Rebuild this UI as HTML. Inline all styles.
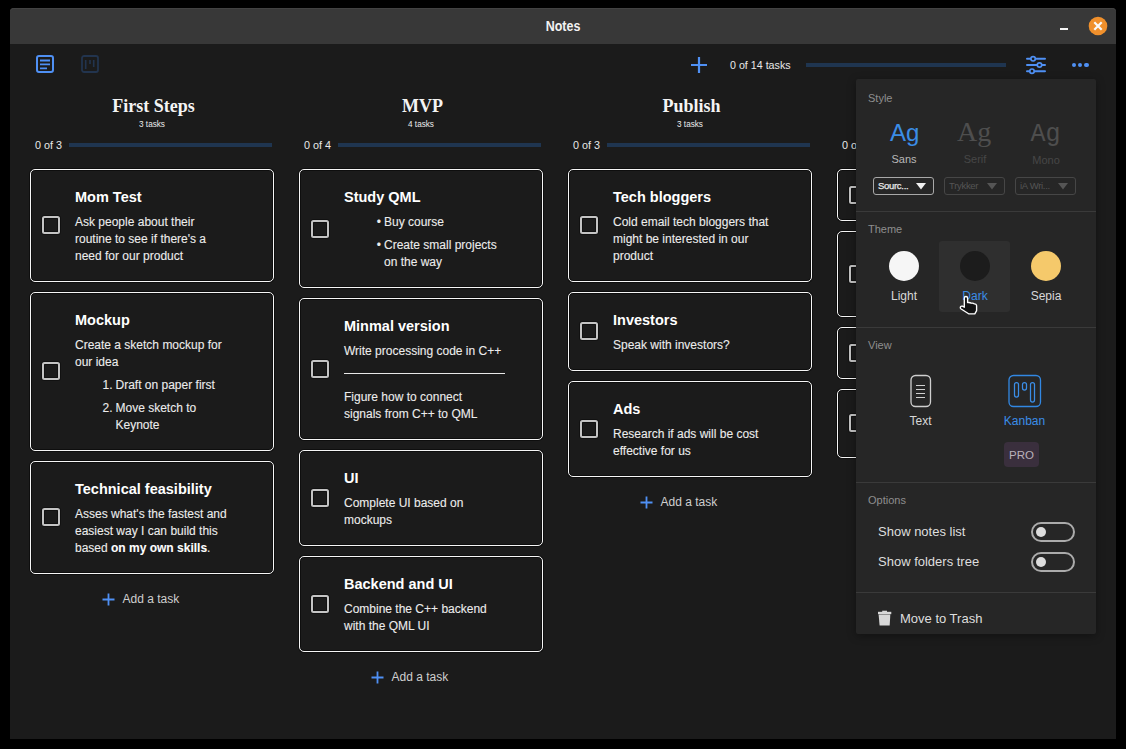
<!DOCTYPE html>
<html><head><meta charset="utf-8"><title>Notes</title>
<style>
html,body{margin:0;padding:0;width:1126px;height:749px;overflow:hidden;background:#000;font-family:'Liberation Sans', sans-serif;}
.t{position:absolute;line-height:0;white-space:nowrap;}
b{font-weight:700}
</style></head><body>
<div style="position:absolute;left:10px;top:8px;width:1106px;height:731px;background:#1b1b1b;border-radius:4px 4px 0 0;"></div>
<div style="position:absolute;left:10px;top:8px;width:1106px;height:36px;background:#383838;border-radius:4px 4px 0 0;box-shadow:inset 0 1px 0 #424242;"></div>
<div class="t" style="left:563px;transform:translateX(-50%);top:25.97px;font-size:14.5px;color:#f2f2f2;font-weight:700;font-family:'Liberation Sans', sans-serif;transform:translateX(-50%) scaleX(0.86);">Notes</div>
<div style="position:absolute;left:1060px;top:28px;width:8px;height:2px;background:#f4f4f4;"></div>
<svg style="position:absolute;left:1088px;top:16px" width="20" height="20"><circle cx="10" cy="10" r="9.3" fill="#f0902c"/><path d="M6.3 6.3L13.7 13.7M13.7 6.3L6.3 13.7" stroke="#fafafa" stroke-width="2.2"/></svg>
<svg style="position:absolute;left:35px;top:54px" width="20" height="20"><rect x="2" y="2" width="16" height="16" rx="2" fill="none" stroke="#4f90f4" stroke-width="2"/><path d="M5 6.5H15M5 10.3H15M5 14.3H12" stroke="#4f90f4" stroke-width="1.8"/></svg>
<svg style="position:absolute;left:80px;top:54px" width="20" height="20"><rect x="2" y="2" width="16" height="16" rx="2" fill="none" stroke="#22344e" stroke-width="1.8"/><path d="M5.7 6V15M10 6V10M13.7 6V13" stroke="#22344e" stroke-width="1.6"/></svg>
<svg style="position:absolute;left:690px;top:56px" width="18" height="18"><path d="M9 1V17M1 9H17" stroke="#4f90f4" stroke-width="2.2"/></svg>
<div class="t" style="left:730px;top:65.19px;font-size:10.7px;color:#e8e8e8;font-weight:400;font-family:'Liberation Sans', sans-serif;">0 of 14 tasks</div>
<div style="position:absolute;left:806px;top:63px;width:200px;height:4px;background:#1f3550;"></div>
<svg style="position:absolute;left:1024px;top:53px" width="24" height="24"><g stroke="#4f90f4" stroke-width="2" stroke-linecap="round" fill="#1b1b1b"><path d="M3 5.8H21M3 12H21M3 18.2H21"/><circle cx="9.1" cy="5.8" r="2.2" stroke-width="1.7"/><circle cx="15.5" cy="12" r="2.2" stroke-width="1.7"/><circle cx="8" cy="18.2" r="2.2" stroke-width="1.7"/></g></svg>
<div style="position:absolute;left:1071.8px;top:62.8px;width:4.4px;height:4.4px;border-radius:50%;background:#4f90f4"></div>
<div style="position:absolute;left:1078.1px;top:62.8px;width:4.4px;height:4.4px;border-radius:50%;background:#4f90f4"></div>
<div style="position:absolute;left:1084.3px;top:62.8px;width:4.4px;height:4.4px;border-radius:50%;background:#4f90f4"></div>
<div class="t" style="left:153.5px;transform:translateX(-50%);top:106.43px;font-size:18px;color:#f4f4f4;font-weight:700;font-family:'Liberation Serif', serif;">First Steps</div>
<div class="t" style="left:152px;transform:translateX(-50%);top:125.16px;font-size:8.2px;color:#ececec;font-weight:400;font-family:'Liberation Sans', sans-serif;">3 tasks</div>
<div class="t" style="left:35px;top:145.06px;font-size:10.8px;color:#e8e8e8;font-weight:400;font-family:'Liberation Sans', sans-serif;">0 of 3</div>
<div style="position:absolute;left:69px;top:143px;width:203px;height:4px;background:#1f3550;"></div>
<div class="t" style="left:422.5px;transform:translateX(-50%);top:106.43px;font-size:18px;color:#f4f4f4;font-weight:700;font-family:'Liberation Serif', serif;">MVP</div>
<div class="t" style="left:421px;transform:translateX(-50%);top:125.16px;font-size:8.2px;color:#ececec;font-weight:400;font-family:'Liberation Sans', sans-serif;">4 tasks</div>
<div class="t" style="left:304px;top:145.06px;font-size:10.8px;color:#e8e8e8;font-weight:400;font-family:'Liberation Sans', sans-serif;">0 of 4</div>
<div style="position:absolute;left:338px;top:143px;width:203px;height:4px;background:#1f3550;"></div>
<div class="t" style="left:691.5px;transform:translateX(-50%);top:106.43px;font-size:18px;color:#f4f4f4;font-weight:700;font-family:'Liberation Serif', serif;">Publish</div>
<div class="t" style="left:690px;transform:translateX(-50%);top:125.16px;font-size:8.2px;color:#ececec;font-weight:400;font-family:'Liberation Sans', sans-serif;">3 tasks</div>
<div class="t" style="left:573px;top:145.06px;font-size:10.8px;color:#e8e8e8;font-weight:400;font-family:'Liberation Sans', sans-serif;">0 of 3</div>
<div style="position:absolute;left:607px;top:143px;width:203px;height:4px;background:#1f3550;"></div>
<div class="t" style="left:842px;top:145.06px;font-size:10.8px;color:#e8e8e8;font-weight:400;font-family:'Liberation Sans', sans-serif;">0 of 3</div>
<div style="position:absolute;left:30px;top:169px;width:244px;height:113px;box-sizing:border-box;border:1px solid #f6f6f6;border-radius:5px;box-shadow:0 0 0 1px rgba(0,0,0,0.45), inset 0 0 0 1px rgba(0,0,0,0.45);"></div>
<div style="position:absolute;left:42px;top:216px;width:18px;height:18px;box-sizing:border-box;border:2px solid #c4c4c4;border-radius:2.5px;box-shadow:0 0 0 1px rgba(0,0,0,0.35), inset 0 0 0 1px rgba(0,0,0,0.35);"></div>
<div class="t" style="left:75px;top:196.57px;font-size:14.5px;color:#ffffff;font-weight:700;font-family:'Liberation Sans', sans-serif;">Mom Test</div>
<div class="t" style="left:75px;top:221.54px;font-size:12px;color:#ececec;font-weight:400;font-family:'Liberation Sans', sans-serif;-webkit-text-stroke:0.2px rgba(236,236,236,0.6);">Ask people about their</div>
<div class="t" style="left:75px;top:238.54px;font-size:12px;color:#ececec;font-weight:400;font-family:'Liberation Sans', sans-serif;-webkit-text-stroke:0.2px rgba(236,236,236,0.6);">routine to see if there's a</div>
<div class="t" style="left:75px;top:255.54px;font-size:12px;color:#ececec;font-weight:400;font-family:'Liberation Sans', sans-serif;-webkit-text-stroke:0.2px rgba(236,236,236,0.6);">need for our product</div>
<div style="position:absolute;left:30px;top:292px;width:244px;height:159px;box-sizing:border-box;border:1px solid #f6f6f6;border-radius:5px;box-shadow:0 0 0 1px rgba(0,0,0,0.45), inset 0 0 0 1px rgba(0,0,0,0.45);"></div>
<div style="position:absolute;left:42px;top:362px;width:18px;height:18px;box-sizing:border-box;border:2px solid #c4c4c4;border-radius:2.5px;box-shadow:0 0 0 1px rgba(0,0,0,0.35), inset 0 0 0 1px rgba(0,0,0,0.35);"></div>
<div class="t" style="left:75px;top:319.57px;font-size:14.5px;color:#ffffff;font-weight:700;font-family:'Liberation Sans', sans-serif;">Mockup</div>
<div class="t" style="left:75px;top:345.34px;font-size:12px;color:#ececec;font-weight:400;font-family:'Liberation Sans', sans-serif;-webkit-text-stroke:0.2px rgba(236,236,236,0.6);">Create a sketch mockup for</div>
<div class="t" style="left:75px;top:362.24px;font-size:12px;color:#ececec;font-weight:400;font-family:'Liberation Sans', sans-serif;-webkit-text-stroke:0.2px rgba(236,236,236,0.6);">our idea</div>
<div class="t" style="left:115.5px;top:385.04px;font-size:12px;color:#ececec;font-weight:400;font-family:'Liberation Sans', sans-serif;-webkit-text-stroke:0.2px rgba(236,236,236,0.6);"><span style="position:absolute;right:100%;padding-right:3px">1.</span>Draft on paper first</div>
<div class="t" style="left:115.5px;top:407.94px;font-size:12px;color:#ececec;font-weight:400;font-family:'Liberation Sans', sans-serif;-webkit-text-stroke:0.2px rgba(236,236,236,0.6);"><span style="position:absolute;right:100%;padding-right:3px">2.</span>Move sketch to</div>
<div class="t" style="left:115.5px;top:424.84px;font-size:12px;color:#ececec;font-weight:400;font-family:'Liberation Sans', sans-serif;-webkit-text-stroke:0.2px rgba(236,236,236,0.6);">Keynote</div>
<div style="position:absolute;left:30px;top:461px;width:244px;height:113px;box-sizing:border-box;border:1px solid #f6f6f6;border-radius:5px;box-shadow:0 0 0 1px rgba(0,0,0,0.45), inset 0 0 0 1px rgba(0,0,0,0.45);"></div>
<div style="position:absolute;left:42px;top:508px;width:18px;height:18px;box-sizing:border-box;border:2px solid #c4c4c4;border-radius:2.5px;box-shadow:0 0 0 1px rgba(0,0,0,0.35), inset 0 0 0 1px rgba(0,0,0,0.35);"></div>
<div class="t" style="left:75px;top:488.57px;font-size:14.5px;color:#ffffff;font-weight:700;font-family:'Liberation Sans', sans-serif;">Technical feasibility</div>
<div class="t" style="left:75px;top:513.84px;font-size:12px;color:#ececec;font-weight:400;font-family:'Liberation Sans', sans-serif;-webkit-text-stroke:0.2px rgba(236,236,236,0.6);">Asses what's the fastest and</div>
<div class="t" style="left:75px;top:530.84px;font-size:12px;color:#ececec;font-weight:400;font-family:'Liberation Sans', sans-serif;-webkit-text-stroke:0.2px rgba(236,236,236,0.6);">easiest way I can build this</div>
<div class="t" style="left:75px;top:547.84px;font-size:12px;color:#ececec;font-weight:400;font-family:'Liberation Sans', sans-serif;-webkit-text-stroke:0.2px rgba(236,236,236,0.6);">based <b style="color:#fff">on my own skills</b>.</div>
<div style="position:absolute;left:299px;top:169px;width:244px;height:119px;box-sizing:border-box;border:1px solid #f6f6f6;border-radius:5px;box-shadow:0 0 0 1px rgba(0,0,0,0.45), inset 0 0 0 1px rgba(0,0,0,0.45);"></div>
<div style="position:absolute;left:311px;top:220px;width:18px;height:18px;box-sizing:border-box;border:2px solid #c4c4c4;border-radius:2.5px;box-shadow:0 0 0 1px rgba(0,0,0,0.35), inset 0 0 0 1px rgba(0,0,0,0.35);"></div>
<div class="t" style="left:344px;top:196.57px;font-size:14.5px;color:#ffffff;font-weight:700;font-family:'Liberation Sans', sans-serif;">Study QML</div>
<div class="t" style="left:384px;top:222.24px;font-size:12px;color:#ececec;font-weight:400;font-family:'Liberation Sans', sans-serif;-webkit-text-stroke:0.2px rgba(236,236,236,0.6);"><span style="position:absolute;right:100%;padding-right:3px">&bull;</span>Buy course</div>
<div class="t" style="left:384px;top:244.84px;font-size:12px;color:#ececec;font-weight:400;font-family:'Liberation Sans', sans-serif;-webkit-text-stroke:0.2px rgba(236,236,236,0.6);"><span style="position:absolute;right:100%;padding-right:3px">&bull;</span>Create small projects</div>
<div class="t" style="left:384px;top:262.14px;font-size:12px;color:#ececec;font-weight:400;font-family:'Liberation Sans', sans-serif;-webkit-text-stroke:0.2px rgba(236,236,236,0.6);">on the way</div>
<div style="position:absolute;left:299px;top:298px;width:244px;height:142px;box-sizing:border-box;border:1px solid #f6f6f6;border-radius:5px;box-shadow:0 0 0 1px rgba(0,0,0,0.45), inset 0 0 0 1px rgba(0,0,0,0.45);"></div>
<div style="position:absolute;left:311px;top:360px;width:18px;height:18px;box-sizing:border-box;border:2px solid #c4c4c4;border-radius:2.5px;box-shadow:0 0 0 1px rgba(0,0,0,0.35), inset 0 0 0 1px rgba(0,0,0,0.35);"></div>
<div class="t" style="left:344px;top:325.57px;font-size:14.5px;color:#ffffff;font-weight:700;font-family:'Liberation Sans', sans-serif;">Minmal version</div>
<div class="t" style="left:344px;top:351.04px;font-size:12px;color:#ececec;font-weight:400;font-family:'Liberation Sans', sans-serif;-webkit-text-stroke:0.2px rgba(236,236,236,0.6);">Write processing code in C++</div>
<div class="t" style="left:344px;top:396.94px;font-size:12px;color:#ececec;font-weight:400;font-family:'Liberation Sans', sans-serif;-webkit-text-stroke:0.2px rgba(236,236,236,0.6);">Figure how to connect</div>
<div class="t" style="left:344px;top:413.84px;font-size:12px;color:#ececec;font-weight:400;font-family:'Liberation Sans', sans-serif;-webkit-text-stroke:0.2px rgba(236,236,236,0.6);">signals from C++ to QML</div>
<div style="position:absolute;left:344px;top:373px;width:161px;height:1px;background:#e8e8e8;"></div>
<div style="position:absolute;left:299px;top:450px;width:244px;height:96px;box-sizing:border-box;border:1px solid #f6f6f6;border-radius:5px;box-shadow:0 0 0 1px rgba(0,0,0,0.45), inset 0 0 0 1px rgba(0,0,0,0.45);"></div>
<div style="position:absolute;left:311px;top:489px;width:18px;height:18px;box-sizing:border-box;border:2px solid #c4c4c4;border-radius:2.5px;box-shadow:0 0 0 1px rgba(0,0,0,0.35), inset 0 0 0 1px rgba(0,0,0,0.35);"></div>
<div class="t" style="left:344px;top:477.57px;font-size:14.5px;color:#ffffff;font-weight:700;font-family:'Liberation Sans', sans-serif;">UI</div>
<div class="t" style="left:344px;top:502.84px;font-size:12px;color:#ececec;font-weight:400;font-family:'Liberation Sans', sans-serif;-webkit-text-stroke:0.2px rgba(236,236,236,0.6);">Complete UI based on</div>
<div class="t" style="left:344px;top:519.84px;font-size:12px;color:#ececec;font-weight:400;font-family:'Liberation Sans', sans-serif;-webkit-text-stroke:0.2px rgba(236,236,236,0.6);">mockups</div>
<div style="position:absolute;left:299px;top:556px;width:244px;height:96px;box-sizing:border-box;border:1px solid #f6f6f6;border-radius:5px;box-shadow:0 0 0 1px rgba(0,0,0,0.45), inset 0 0 0 1px rgba(0,0,0,0.45);"></div>
<div style="position:absolute;left:311px;top:595px;width:18px;height:18px;box-sizing:border-box;border:2px solid #c4c4c4;border-radius:2.5px;box-shadow:0 0 0 1px rgba(0,0,0,0.35), inset 0 0 0 1px rgba(0,0,0,0.35);"></div>
<div class="t" style="left:344px;top:583.57px;font-size:14.5px;color:#ffffff;font-weight:700;font-family:'Liberation Sans', sans-serif;">Backend and UI</div>
<div class="t" style="left:344px;top:608.84px;font-size:12px;color:#ececec;font-weight:400;font-family:'Liberation Sans', sans-serif;-webkit-text-stroke:0.2px rgba(236,236,236,0.6);">Combine the C++ backend</div>
<div class="t" style="left:344px;top:625.84px;font-size:12px;color:#ececec;font-weight:400;font-family:'Liberation Sans', sans-serif;-webkit-text-stroke:0.2px rgba(236,236,236,0.6);">with the QML UI</div>
<div style="position:absolute;left:568px;top:169px;width:244px;height:113px;box-sizing:border-box;border:1px solid #f6f6f6;border-radius:5px;box-shadow:0 0 0 1px rgba(0,0,0,0.45), inset 0 0 0 1px rgba(0,0,0,0.45);"></div>
<div style="position:absolute;left:580px;top:216px;width:18px;height:18px;box-sizing:border-box;border:2px solid #c4c4c4;border-radius:2.5px;box-shadow:0 0 0 1px rgba(0,0,0,0.35), inset 0 0 0 1px rgba(0,0,0,0.35);"></div>
<div class="t" style="left:613px;top:196.57px;font-size:14.5px;color:#ffffff;font-weight:700;font-family:'Liberation Sans', sans-serif;">Tech bloggers</div>
<div class="t" style="left:613px;top:221.84px;font-size:12px;color:#ececec;font-weight:400;font-family:'Liberation Sans', sans-serif;-webkit-text-stroke:0.2px rgba(236,236,236,0.6);">Cold email tech bloggers that</div>
<div class="t" style="left:613px;top:238.84px;font-size:12px;color:#ececec;font-weight:400;font-family:'Liberation Sans', sans-serif;-webkit-text-stroke:0.2px rgba(236,236,236,0.6);">might be interested in our</div>
<div class="t" style="left:613px;top:255.84px;font-size:12px;color:#ececec;font-weight:400;font-family:'Liberation Sans', sans-serif;-webkit-text-stroke:0.2px rgba(236,236,236,0.6);">product</div>
<div style="position:absolute;left:568px;top:292px;width:244px;height:79px;box-sizing:border-box;border:1px solid #f6f6f6;border-radius:5px;box-shadow:0 0 0 1px rgba(0,0,0,0.45), inset 0 0 0 1px rgba(0,0,0,0.45);"></div>
<div style="position:absolute;left:580px;top:322px;width:18px;height:18px;box-sizing:border-box;border:2px solid #c4c4c4;border-radius:2.5px;box-shadow:0 0 0 1px rgba(0,0,0,0.35), inset 0 0 0 1px rgba(0,0,0,0.35);"></div>
<div class="t" style="left:613px;top:319.57px;font-size:14.5px;color:#ffffff;font-weight:700;font-family:'Liberation Sans', sans-serif;">Investors</div>
<div class="t" style="left:613px;top:344.84px;font-size:12px;color:#ececec;font-weight:400;font-family:'Liberation Sans', sans-serif;-webkit-text-stroke:0.2px rgba(236,236,236,0.6);">Speak with investors?</div>
<div style="position:absolute;left:568px;top:381px;width:244px;height:96px;box-sizing:border-box;border:1px solid #f6f6f6;border-radius:5px;box-shadow:0 0 0 1px rgba(0,0,0,0.45), inset 0 0 0 1px rgba(0,0,0,0.45);"></div>
<div style="position:absolute;left:580px;top:420px;width:18px;height:18px;box-sizing:border-box;border:2px solid #c4c4c4;border-radius:2.5px;box-shadow:0 0 0 1px rgba(0,0,0,0.35), inset 0 0 0 1px rgba(0,0,0,0.35);"></div>
<div class="t" style="left:613px;top:408.57px;font-size:14.5px;color:#ffffff;font-weight:700;font-family:'Liberation Sans', sans-serif;">Ads</div>
<div class="t" style="left:613px;top:433.84px;font-size:12px;color:#ececec;font-weight:400;font-family:'Liberation Sans', sans-serif;-webkit-text-stroke:0.2px rgba(236,236,236,0.6);">Research if ads will be cost</div>
<div class="t" style="left:613px;top:450.84px;font-size:12px;color:#ececec;font-weight:400;font-family:'Liberation Sans', sans-serif;-webkit-text-stroke:0.2px rgba(236,236,236,0.6);">effective for us</div>
<div style="position:absolute;left:837px;top:169px;width:244px;height:52px;box-sizing:border-box;border:1px solid #f6f6f6;border-radius:5px;box-shadow:0 0 0 1px rgba(0,0,0,0.45), inset 0 0 0 1px rgba(0,0,0,0.45);"></div>
<div style="position:absolute;left:849px;top:186px;width:18px;height:18px;box-sizing:border-box;border:2px solid #c4c4c4;border-radius:2.5px;box-shadow:0 0 0 1px rgba(0,0,0,0.35), inset 0 0 0 1px rgba(0,0,0,0.35);"></div>
<div class="t" style="left:882px;top:196.57px;font-size:14.5px;color:#ffffff;font-weight:700;font-family:'Liberation Sans', sans-serif;"></div>
<div style="position:absolute;left:837px;top:231px;width:244px;height:86px;box-sizing:border-box;border:1px solid #f6f6f6;border-radius:5px;box-shadow:0 0 0 1px rgba(0,0,0,0.45), inset 0 0 0 1px rgba(0,0,0,0.45);"></div>
<div style="position:absolute;left:849px;top:265px;width:18px;height:18px;box-sizing:border-box;border:2px solid #c4c4c4;border-radius:2.5px;box-shadow:0 0 0 1px rgba(0,0,0,0.35), inset 0 0 0 1px rgba(0,0,0,0.35);"></div>
<div class="t" style="left:882px;top:258.57px;font-size:14.5px;color:#ffffff;font-weight:700;font-family:'Liberation Sans', sans-serif;"></div>
<div style="position:absolute;left:837px;top:327px;width:244px;height:52px;box-sizing:border-box;border:1px solid #f6f6f6;border-radius:5px;box-shadow:0 0 0 1px rgba(0,0,0,0.45), inset 0 0 0 1px rgba(0,0,0,0.45);"></div>
<div style="position:absolute;left:849px;top:344px;width:18px;height:18px;box-sizing:border-box;border:2px solid #c4c4c4;border-radius:2.5px;box-shadow:0 0 0 1px rgba(0,0,0,0.35), inset 0 0 0 1px rgba(0,0,0,0.35);"></div>
<div class="t" style="left:882px;top:354.57px;font-size:14.5px;color:#ffffff;font-weight:700;font-family:'Liberation Sans', sans-serif;"></div>
<div style="position:absolute;left:837px;top:389px;width:244px;height:69px;box-sizing:border-box;border:1px solid #f6f6f6;border-radius:5px;box-shadow:0 0 0 1px rgba(0,0,0,0.45), inset 0 0 0 1px rgba(0,0,0,0.45);"></div>
<div style="position:absolute;left:849px;top:414px;width:18px;height:18px;box-sizing:border-box;border:2px solid #c4c4c4;border-radius:2.5px;box-shadow:0 0 0 1px rgba(0,0,0,0.35), inset 0 0 0 1px rgba(0,0,0,0.35);"></div>
<div class="t" style="left:882px;top:416.57px;font-size:14.5px;color:#ffffff;font-weight:700;font-family:'Liberation Sans', sans-serif;"></div>
<svg style="position:absolute;left:102.0px;top:592.5px" width="13" height="13"><path d="M6.5 0.5V12.5M0.5 6.5H12.5" stroke="#4f90f4" stroke-width="1.8"/></svg>
<div class="t" style="left:122.5px;top:599.04px;font-size:12px;color:#cfcfcf;font-weight:400;font-family:'Liberation Sans', sans-serif;">Add a task</div>
<svg style="position:absolute;left:371.0px;top:670.5px" width="13" height="13"><path d="M6.5 0.5V12.5M0.5 6.5H12.5" stroke="#4f90f4" stroke-width="1.8"/></svg>
<div class="t" style="left:391.5px;top:677.04px;font-size:12px;color:#cfcfcf;font-weight:400;font-family:'Liberation Sans', sans-serif;">Add a task</div>
<svg style="position:absolute;left:640.0px;top:495.5px" width="13" height="13"><path d="M6.5 0.5V12.5M0.5 6.5H12.5" stroke="#4f90f4" stroke-width="1.8"/></svg>
<div class="t" style="left:660.5px;top:502.04px;font-size:12px;color:#cfcfcf;font-weight:400;font-family:'Liberation Sans', sans-serif;">Add a task</div>
<div style="position:absolute;left:856px;top:79px;width:240px;height:555px;background:#262626;border-radius:2px;box-shadow:0 2px 8px rgba(0,0,0,0.35)"></div>
<div class="t" style="left:868px;top:97.69px;font-size:11px;color:#8e8e8e;font-weight:400;font-family:'Liberation Sans', sans-serif;">Style</div>
<div class="t" style="left:890px;top:133.38px;font-size:24px;color:#3b8de6;font-weight:400;font-family:'Liberation Sans', sans-serif;">Ag</div>
<div class="t" style="left:957px;top:132.25px;font-size:28px;color:#4e4e4e;font-weight:400;font-family:'Liberation Serif', serif;">Ag</div>
<div class="t" style="left:1030.5px;top:135.05px;font-size:25px;color:#4e4e4e;font-weight:400;font-family:'Liberation Mono', monospace;">Ag</div>
<div class="t" style="left:904px;transform:translateX(-50%);top:158.59px;font-size:11px;color:#b8b8b8;font-weight:400;font-family:'Liberation Sans', sans-serif;">Sans</div>
<div class="t" style="left:975px;transform:translateX(-50%);top:158.59px;font-size:11px;color:#474747;font-weight:400;font-family:'Liberation Sans', sans-serif;">Serif</div>
<div class="t" style="left:1046px;transform:translateX(-50%);top:159.59px;font-size:11px;color:#474747;font-weight:400;font-family:'Liberation Sans', sans-serif;">Mono</div>
<div style="position:absolute;left:873px;top:177px;width:61px;height:18px;box-sizing:border-box;border:1px solid #a8a8a8;border-radius:3px;"></div>
<div class="t" style="left:878px;top:186.21px;font-size:9.5px;color:#e8e8e8;font-weight:400;font-family:'Liberation Sans', sans-serif;letter-spacing:-0.3px;-webkit-text-stroke:0.25px #e8e8e8;">Sourc...</div>
<svg style="position:absolute;left:916px;top:183px" width="10" height="7"><path d="M0 0H10L5 6.5Z" fill="#f0f0f0"/></svg>
<div style="position:absolute;left:944px;top:177px;width:61px;height:18px;box-sizing:border-box;border:1px solid #464646;border-radius:3px;"></div>
<div class="t" style="left:949px;top:186.21px;font-size:9.5px;color:#555555;font-weight:400;font-family:'Liberation Sans', sans-serif;letter-spacing:-0.3px;">Trykker</div>
<svg style="position:absolute;left:987px;top:183px" width="10" height="7"><path d="M0 0H10L5 6.5Z" fill="#555"/></svg>
<div style="position:absolute;left:1015px;top:177px;width:61px;height:18px;box-sizing:border-box;border:1px solid #464646;border-radius:3px;"></div>
<div class="t" style="left:1020px;top:186.21px;font-size:9.5px;color:#555555;font-weight:400;font-family:'Liberation Sans', sans-serif;letter-spacing:-0.3px;">iA Wri...</div>
<svg style="position:absolute;left:1058px;top:183px" width="10" height="7"><path d="M0 0H10L5 6.5Z" fill="#555"/></svg>
<div style="position:absolute;left:856px;top:210.5px;width:240px;height:1px;background:#3a3a3a;"></div>
<div class="t" style="left:868px;top:228.79px;font-size:11px;color:#8e8e8e;font-weight:400;font-family:'Liberation Sans', sans-serif;">Theme</div>
<div style="position:absolute;left:939px;top:241px;width:71px;height:71px;background:#2f2f2f;border-radius:3px;"></div>
<div style="position:absolute;left:888.75px;top:250.55px;width:30.5px;height:30.5px;border-radius:50%;background:#f6f6f6"></div>
<div style="position:absolute;left:959.75px;top:250.55px;width:30.5px;height:30.5px;border-radius:50%;background:#1c1c1c"></div>
<div style="position:absolute;left:1030.75px;top:250.55px;width:30.5px;height:30.5px;border-radius:50%;background:#f5c96b"></div>
<div class="t" style="left:904px;transform:translateX(-50%);top:296.04px;font-size:12px;color:#d8d8d8;font-weight:400;font-family:'Liberation Sans', sans-serif;">Light</div>
<div class="t" style="left:975px;transform:translateX(-50%);top:296.04px;font-size:12px;color:#3b8de6;font-weight:400;font-family:'Liberation Sans', sans-serif;">Dark</div>
<div class="t" style="left:1046px;transform:translateX(-50%);top:296.04px;font-size:12px;color:#d8d8d8;font-weight:400;font-family:'Liberation Sans', sans-serif;">Sepia</div>
<div style="position:absolute;left:856px;top:326.5px;width:240px;height:1px;background:#3a3a3a;"></div>
<div class="t" style="left:868px;top:344.69px;font-size:11px;color:#8e8e8e;font-weight:400;font-family:'Liberation Sans', sans-serif;">View</div>
<svg style="position:absolute;left:910px;top:374px" width="22" height="34"><rect x="1" y="1.5" width="19.5" height="31" rx="4.5" fill="none" stroke="#cfcfcf" stroke-width="1.3"/><path d="M6 11.5H15M6 15.5H15M6 19.5H15M6 23.5H15" stroke="#d0d0d0" stroke-width="1.1"/></svg>
<svg style="position:absolute;left:1008px;top:374px" width="34" height="34"><rect x="1" y="1.5" width="31.5" height="31" rx="4.5" fill="none" stroke="#3288e3" stroke-width="1.3"/><g fill="none" stroke="#3b8de6" stroke-width="1.25"><rect x="6.5" y="8.5" width="4" height="14.5" rx="2"/><rect x="14.5" y="8.5" width="4" height="7.5" rx="2"/><rect x="22.5" y="8.5" width="4" height="19.5" rx="2"/></g></svg>
<div class="t" style="left:920.5px;transform:translateX(-50%);top:421.34px;font-size:12px;color:#d8d8d8;font-weight:400;font-family:'Liberation Sans', sans-serif;">Text</div>
<div class="t" style="left:1024.5px;transform:translateX(-50%);top:421.34px;font-size:12px;color:#3b8de6;font-weight:400;font-family:'Liberation Sans', sans-serif;">Kanban</div>
<div style="position:absolute;left:1004px;top:442px;width:35px;height:25px;background:#3a2f3d;border-radius:4px;"></div>
<div class="t" style="left:1021.5px;transform:translateX(-50%);top:454.51px;font-size:11.5px;color:#b9b1ba;font-weight:400;font-family:'Liberation Sans', sans-serif;">PRO</div>
<div style="position:absolute;left:856px;top:482px;width:240px;height:1px;background:#3a3a3a;"></div>
<div class="t" style="left:868px;top:500.19px;font-size:11px;color:#8e8e8e;font-weight:400;font-family:'Liberation Sans', sans-serif;">Options</div>
<div class="t" style="left:878px;top:532.19px;font-size:13px;color:#dedede;font-weight:400;font-family:'Liberation Sans', sans-serif;">Show notes list</div>
<div class="t" style="left:878px;top:561.89px;font-size:13px;color:#dedede;font-weight:400;font-family:'Liberation Sans', sans-serif;">Show folders tree</div>
<div style="position:absolute;left:1031px;top:522px;width:44px;height:20px;box-sizing:border-box;border:2px solid #ababab;border-radius:10px;"></div>
<div style="position:absolute;left:1035.7px;top:527px;width:10px;height:10px;border-radius:50%;background:#dcdcdc"></div>
<div style="position:absolute;left:1031px;top:552px;width:44px;height:20px;box-sizing:border-box;border:2px solid #ababab;border-radius:10px;"></div>
<div style="position:absolute;left:1035.7px;top:557px;width:10px;height:10px;border-radius:50%;background:#dcdcdc"></div>
<div style="position:absolute;left:856px;top:592px;width:240px;height:1px;background:#3a3a3a;"></div>
<svg style="position:absolute;left:877px;top:610px" width="16" height="17"><path d="M1 3H14.3" stroke="#d8d8d8" stroke-width="2.4"/><path d="M5.2 1.4H10" stroke="#d8d8d8" stroke-width="1.4"/><path d="M1.6 4.4H13.3L12.7 15.6H2.6Z" fill="#d8d8d8"/></svg>
<div class="t" style="left:900px;top:619.19px;font-size:13px;color:#dedede;font-weight:400;font-family:'Liberation Sans', sans-serif;">Move to Trash</div>
<svg style="position:absolute;left:958px;top:292px" width="24" height="26" viewBox="0 0 24 26"><path d="M6.3 15.2V6.2C6.3 3.9 9.6 3.9 9.6 6.2V10.6C11.5 10.4 12.5 10.6 13.2 11.2C14.2 11 15.6 11.2 16.2 11.9C17.4 11.8 18.6 12.4 18.6 13.8V18.6L16.8 21.8H10.6L2.8 16.8C1.6 15.9 2.6 13.6 4.4 14.2Z" fill="#121212" stroke="#ffffff" stroke-width="1.35" stroke-linejoin="round"/></svg>
</body></html>
